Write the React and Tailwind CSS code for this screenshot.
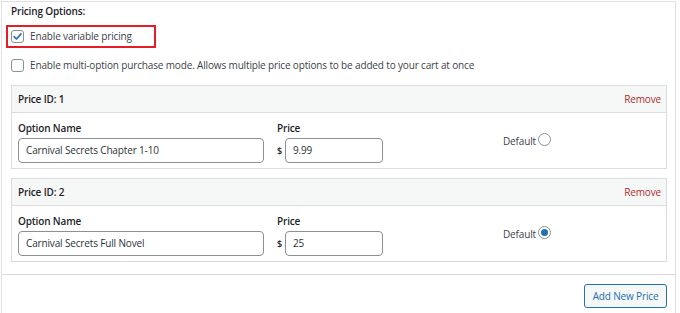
import React from "react";

const font = { fontFamily: '"Open Sans", "Noto Sans", Arial, sans-serif' };

function Checkbox({ checked }) {
  return (
    <span className="flex h-[13px] w-[13px] shrink-0 items-center justify-center rounded-[3px] border border-[#8c8f94] bg-white">
      {checked && (
        <svg viewBox="0 0 12 12" className="h-[11px] w-[11px]">
          <path d="M2.3 6.2 L4.9 8.7 L9.8 3.1" fill="none" stroke="#2271b1" strokeWidth="1.8" strokeLinecap="round" strokeLinejoin="round" />
        </svg>
      )}
    </span>
  );
}

function Radio({ checked }) {
  return (
    <span className="flex h-[13px] w-[13px] shrink-0 items-center justify-center rounded-full border border-[#8c8f94] bg-white">
      {checked && <span className="h-[7px] w-[7px] rounded-full bg-[#2271b1]" />}
    </span>
  );
}

function PriceBox({ id, name, price, isDefault }) {
  return (
    <div className="w-[656px] border border-[#dcdcde] bg-white">
      <div className="flex h-[27px] items-center justify-between border-b border-[#dcdcde] bg-[#f6f7f7] pl-[6px] pr-[5px]">
        <span className="text-[10px] font-semibold text-[#1d2327]">Price ID: {id}</span>
        <span className="text-[10px] text-[#b32d2e]">Remove</span>
      </div>
      <div className="flex h-[55px] pl-[6px] pt-[8px]">
        <div className="flex w-[259px] flex-col">
          <span className="h-[14px] text-[10px] font-semibold leading-[14px] text-[#1d2327]">Option Name</span>
          <div className="mt-[3px] flex h-[25px] w-[246px] items-center rounded-[4px] border border-[#8c8f94] px-[7px] text-[10px] text-[#2c3338]">
            {name}
          </div>
        </div>
        <div className="flex w-[226px] flex-col">
          <span className="h-[14px] text-[10px] font-semibold leading-[14px] text-[#1d2327]">Price</span>
          <div className="mt-[3px] flex items-center">
            <span className="w-[8px] text-[9px] font-semibold text-[#1d2327]">$</span>
            <div className="flex h-[25px] w-[98px] items-center rounded-[4px] border border-[#8c8f94] px-[7px] text-[10px] text-[#2c3338]">
              {price}
            </div>
          </div>
        </div>
        <div className="mt-[10px] flex h-[20px] items-center gap-[2px]">
          <span className="text-[10px] text-[#3c434a]">Default</span>
          <span className="-mt-[3px]">
            <Radio checked={isDefault} />
          </span>
        </div>
      </div>
    </div>
  );
}

export default function App() {
  return (
    <div className="h-[313px] w-[680px] overflow-hidden bg-white pt-px tracking-[-0.15px]" style={font}>
      <div className="ml-px h-[320px] w-[675px] border border-[#e0e0e0]">
        <div className="pl-[9px]">
          <div className="h-[18px] text-[10px] font-semibold leading-[18px] text-[#1d2327]">Pricing Options:</div>
          <div className="-ml-[5px] mt-[5px] flex h-[23px] w-[150px] items-center gap-[6px] border-2 border-[#e41e26] pl-[3px]">
            <Checkbox checked />
            <span className="text-[10px] text-[#3c434a]">Enable variable pricing</span>
          </div>
          <div className="mt-[7px] flex h-[20px] items-center gap-[6px]">
            <Checkbox />
            <span className="text-[10px] text-[#3c434a]">
              Enable multi-option purchase mode. Allows multiple price options to be added to your cart at once
            </span>
          </div>
          <div className="mt-[10px] flex flex-col gap-[9px]">
            <PriceBox id={1} name="Carnival Secrets Chapter 1-10" price="9.99" />
            <PriceBox id={2} name="Carnival Secrets Full Novel" price="25" isDefault />
          </div>
        </div>
        <div className="mt-[12px] flex border-t border-[#dcdcde] pr-[8px] pt-[9px]">
          <button className="ml-auto flex h-[24px] w-[83px] items-center justify-center rounded-[3px] border border-[#2271b1] bg-[#f6f7f7] text-[10px] text-[#2271b1]">
            Add New Price
          </button>
        </div>
      </div>
    </div>
  );
}
